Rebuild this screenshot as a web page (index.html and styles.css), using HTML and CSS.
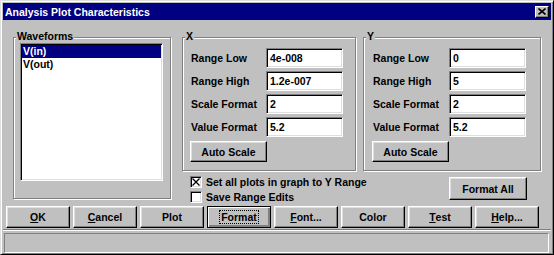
FILE: index.html
```html
<!DOCTYPE html>
<html>
<head>
    <title>Analysis Plot Characteristics</title>
    <link rel="stylesheet" href="styles.css">
</head>
<body>
<div class="window">
    <div class="titlebar">
        <span class="title">Analysis Plot Characteristics</span>
        <span class="close">
            <svg width="8" height="7" viewBox="0 0 8 7"><path d="M0.5 0.5 L7.5 6.5 M7.5 0.5 L0.5 6.5" stroke="#000" stroke-width="1.6" fill="none"/></svg>
        </span>
    </div>

    <div class="content">
        <div class="top">
            <div class="group waveforms">
                <span class="caption">Waveforms</span>
                <div class="list sunken">
                    <div class="item selected">V(in)</div>
                    <div class="item">V(out)</div>
                </div>
            </div>

            <div class="right">
                <div class="axes">
                    <div class="group axis axis-x">
                        <span class="caption">X</span>
                        <div class="fields">
                            <label>Range Low</label><div class="field sunken">4e-008</div>
                            <label>Range High</label><div class="field sunken">1.2e-007</div>
                            <label>Scale Format</label><div class="field sunken">2</div>
                            <label>Value Format</label><div class="field sunken">5.2</div>
                        </div>
                        <div class="btn auto">Auto Scale</div>
                    </div>
                    <div class="group axis axis-y">
                        <span class="caption">Y</span>
                        <div class="fields">
                            <label>Range Low</label><div class="field sunken">0</div>
                            <label>Range High</label><div class="field sunken">5</div>
                            <label>Scale Format</label><div class="field sunken">2</div>
                            <label>Value Format</label><div class="field sunken">5.2</div>
                        </div>
                        <div class="btn auto">Auto Scale</div>
                    </div>
                </div>

                <div class="options">
                    <div class="checks">
                        <div class="check">
                            <span class="box sunken">
                                <svg width="8" height="8" viewBox="0 0 8 8"><path d="M0.5 0.5 L7.5 7.5 M7.5 0.5 L0.5 7.5" stroke="#000" stroke-width="1.3" fill="none"/></svg>
                            </span>
                            Set all plots in graph to Y Range
                        </div>
                        <div class="check">
                            <span class="box sunken"></span>
                            Save Range Edits
                        </div>
                    </div>
                    <div class="btn format-all">Format All</div>
                </div>
            </div>
        </div>

        <div class="buttons">
            <div class="btn"><u>O</u>K</div>
            <div class="btn"><u>C</u>ancel</div>
            <div class="btn">Plot</div>
            <div class="btn default"><span class="focus">Format</span></div>
            <div class="btn"><u>F</u>ont...</div>
            <div class="btn">Color</div>
            <div class="btn"><u>T</u>est</div>
            <div class="btn"><u>H</u>elp...</div>
        </div>

        <div class="separator"></div>
        <div class="status"></div>
    </div>
</div>
</body>
</html>
```

FILE: styles.css
```css
* {
    box-sizing: border-box;
}

body {
    margin: 0;
    background-color: #c0c0c0;
    color: #000;
    font-family: "Liberation Sans", Arial, sans-serif;
    font-size: 10.5px;
    font-weight: bold;
}

.window {
    width: 554px;
    height: 255px;
    display: flex;
    flex-direction: column;
    padding: 2px 2px 1px 2px;
    background-color: #c0c0c0;
    border: 1px solid;
    border-color: #dfdfdf #000 #000 #dfdfdf;
    box-shadow: inset 1px 1px #fff, inset -1px -1px #808080;
}

.titlebar {
    height: 17px;
    display: flex;
    align-items: center;
    justify-content: space-between;
    padding: 0 2px 0 2px;
    background-color: #000080;
    color: #fff;
}

.close {
    width: 14px;
    height: 12px;
    display: flex;
    align-items: center;
    justify-content: center;
    background-color: #c0c0c0;
    border: 1px solid;
    border-color: #fff #000 #000 #fff;
    box-shadow: inset -1px -1px #808080;
}

.content {
    display: flex;
    flex-direction: column;
    padding-top: 17px;
}

.top {
    display: flex;
    align-items: flex-start;
}

/* etched group box */
.group {
    position: relative;
    border: 1px solid #808080;
    box-shadow: inset 1px 1px #fff, 1px 1px #fff;
}

.caption {
    position: absolute;
    top: -8px;
    left: 2px;
    padding: 0 1px;
    line-height: 13px;
    background-color: #c0c0c0;
}

.sunken {
    background-color: #fff;
    border: 1px solid;
    border-color: #808080 #fff #fff #808080;
    box-shadow: inset 1px 1px #000, inset -1px -1px #dfdfdf;
}

.waveforms {
    width: 158px;
    height: 162px;
    margin-left: 10px;
    padding: 5px 0 0 6px;
}

.list {
    width: 143px;
    height: 138px;
    padding: 1px 1px 1px 1px;
}

.item {
    height: 13px;
    line-height: 13px;
    padding-left: 1px;
}

.item.selected {
    background-color: #000080;
    color: #fff;
}

.right {
    display: flex;
    flex-direction: column;
    margin-left: 11px;
}

.axes {
    display: flex;
    gap: 7px;
}

.axis {
    height: 134px;
    padding: 10px 0 0 8px;
}

.axis-x {
    width: 174px;
}

.axis-y {
    width: 178px;
    padding-left: 9px;
}

.fields {
    display: grid;
    grid-template-columns: 75px 77px;
    row-gap: 3px;
    align-items: center;
}

.axis-y .fields {
    grid-template-columns: 76px 77px;
}

.field {
    height: 20px;
    line-height: 18px;
    padding-left: 3px;
}

.btn {
    display: flex;
    align-items: center;
    justify-content: center;
    background-color: #c0c0c0;
    border: 1px solid;
    border-color: #fff #000 #000 #fff;
    box-shadow: inset -1px -1px #808080, inset 1px 1px #dfdfdf;
}

.btn.default {
    border: 1px solid #000;
    box-shadow: inset 1px 1px #fff, inset -2px -2px #808080, inset -1px -1px #000;
}

.focus {
    padding: 0 1px;
    line-height: 12px;
    border: 1px dotted #000;
}

.auto {
    width: 77px;
    height: 21px;
    margin: 4px 0 0 -1px;
}

.options {
    display: flex;
    margin-top: 3px;
}

.checks {
    display: flex;
    flex-direction: column;
    padding-left: 8px;
}

.check {
    height: 15px;
    display: flex;
    align-items: center;
    gap: 4px;
}

.box {
    width: 12px;
    height: 12px;
    display: flex;
    align-items: center;
    justify-content: center;
}

.format-all {
    width: 78px;
    height: 23px;
    margin: 3px 14px 0 auto;
}

.buttons {
    display: flex;
    gap: 3px;
    margin: 2px 0 0 3px;
}

.buttons .btn {
    width: 64px;
    height: 22px;
}

.separator {
    height: 2px;
    margin-top: 1px;
    border-top: 1px solid #808080;
    border-bottom: 1px solid #fff;
}

.status {
    height: 20px;
    margin: 2px 2px 0 1px;
    border: 1px solid;
    border-color: #808080 #fff #fff #808080;
}
```
